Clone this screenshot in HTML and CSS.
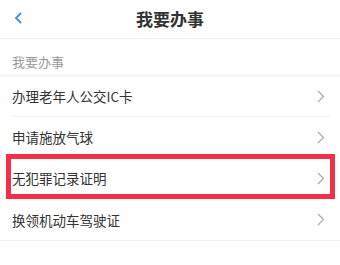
FILE: index.html
```html
<!DOCTYPE html>
<html lang="zh-CN">
    <head>
        <meta charset="UTF-8">
        <meta name="viewport" content="width=device-width, initial-scale=1.0">
        <title>我要办事</title>
        <link rel="stylesheet" href="styles.css">
    </head>
    <body>
        <div class="topbar">
            <a class="back">
                <svg width="9" height="12" viewBox="0 0 9 12"><path d="M7 1 L2 6 L7 11" fill="none" stroke="#3b8ef0" stroke-width="1.8"/></svg>
            </a>
            <div class="title">我要办事</div>
            <div></div>
        </div>

        <div class="section">我要办事</div>

        <ul class="list">
            <li class="item"><span>办理老年人公交IC卡</span><i class="arrow"><svg width="8" height="13" viewBox="0 0 8 13"><path d="M1 1 L6.5 6.5 L1 12" fill="none" stroke="#aaa" stroke-width="1.2"/></svg></i></li>
            <li class="item"><span>申请施放气球</span><i class="arrow"><svg width="8" height="13" viewBox="0 0 8 13"><path d="M1 1 L6.5 6.5 L1 12" fill="none" stroke="#aaa" stroke-width="1.2"/></svg></i></li>
            <li class="item marked"><span>无犯罪记录证明</span><i class="arrow"><svg width="8" height="13" viewBox="0 0 8 13"><path d="M1 1 L6.5 6.5 L1 12" fill="none" stroke="#aaa" stroke-width="1.2"/></svg></i></li>
            <li class="item"><span>换领机动车驾驶证</span><i class="arrow"><svg width="8" height="13" viewBox="0 0 8 13"><path d="M1 1 L6.5 6.5 L1 12" fill="none" stroke="#aaa" stroke-width="1.2"/></svg></i></li>
        </ul>
    </body>
</html>
```

FILE: styles.css
```css
*{
    margin: 0;
    padding: 0;
    box-sizing: border-box;
}

body{
    width: 340px;
    background: #fff;
    font-family: "Noto Sans CJK SC", "Noto Sans", sans-serif;
    color: #333;
}

.topbar{
    height: 39px;
    display: grid;
    grid-template-columns: 1fr auto 1fr;
    align-items: center;
    border-bottom: 1px solid #f0f0f0;
}

.back{
    display: flex;
    padding-left: 14px;
    padding-bottom: 2px;
}

.title{
    font-size: 17px;
    font-weight: 600;
    color: #333;
    padding-bottom: 2px;
}

.section{
    height: 37px;
    display: flex;
    align-items: center;
    padding: 8px 0 0 12px;
    font-size: 13px;
    color: #999;
    border-bottom: 1px solid #eee;
}

.list{
    list-style: none;
    border-bottom: 1px solid #eee;
}

.item{
    position: relative;
    height: 41px;
    margin-left: 12px;
    margin-right: 10px;
    padding-right: 5px;
    display: flex;
    align-items: center;
    justify-content: space-between;
    font-size: 13.5px;
    border-bottom: 1px solid #f0f0f0;
}

.item:last-child{
    border-bottom: none;
}

.arrow{
    display: flex;
}

.marked::after{
    content: "";
    position: absolute;
    top: -4px;
    bottom: -1px;
    left: -6px;
    right: -5px;
    border: 5px solid #f23148;
}
```
